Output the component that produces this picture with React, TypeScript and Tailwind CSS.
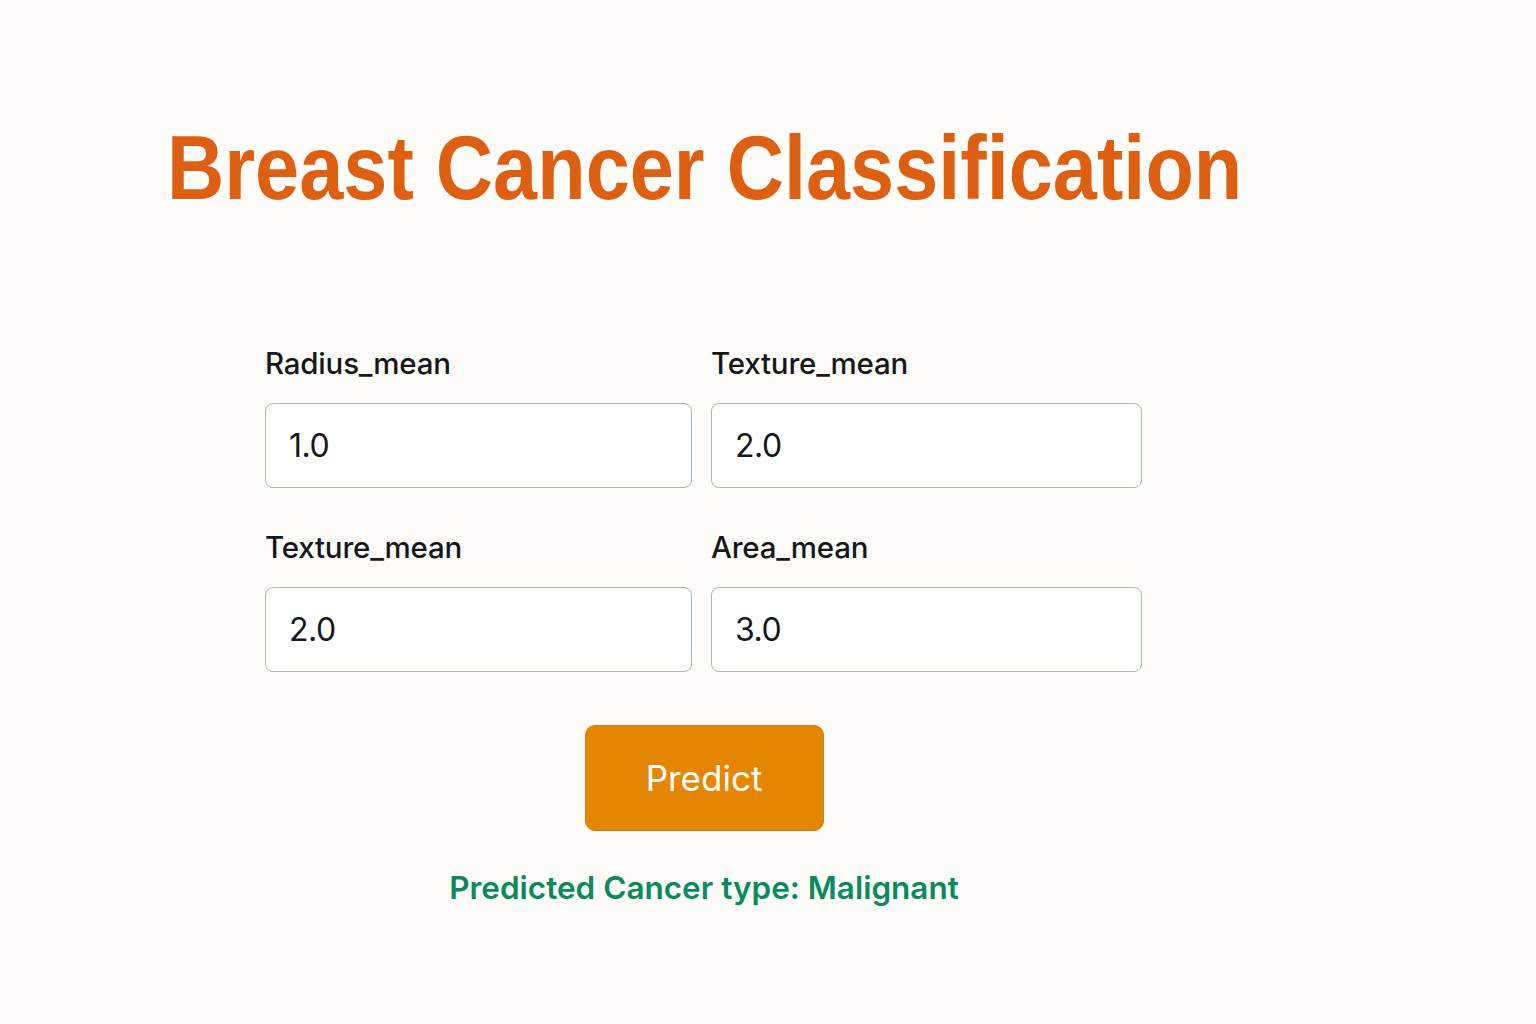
import React from "react";

function Field({ label, value, w }: { label: string; value: string; w: string }) {
  return (
    <div className={`flex flex-col ${w}`}>
      <label className="h-[38px] text-[29.5px] leading-[38px] font-medium text-[#15171c] tracking-[-0.2px]">{label}</label>
      <div className="mt-[21px] h-[85px] rounded-[8px] border border-[#a9b5c4] bg-white flex items-center px-[23px]">
        <span className="text-[32px] text-[#15171c] tracking-[-0.5px]">{value}</span>
      </div>
    </div>
  );
}

export default function App() {
  return (
    <div className="min-h-screen w-full bg-[#fdfcf8] [font-family:Inter,'Noto_Sans',sans-serif]">
      <div className="pt-[118px] pl-[167px]">
        <h1 className="inline-block origin-left scale-x-[0.881] text-[90px] leading-[100px] font-bold text-[#dc5f12] whitespace-nowrap [font-family:'Liberation_Sans',Arial,sans-serif]">
          Breast Cancer Classification
        </h1>
      </div>
      <div className="pl-[265px] pt-[126px]">
        <div className="flex gap-[19px]">
          <Field label="Radius_mean" value="1.0" w="w-[427px]" />
          <Field label="Texture_mean" value="2.0" w="w-[431px]" />
        </div>
        <div className="flex gap-[19px] mt-[40px]">
          <Field label="Texture_mean" value="2.0" w="w-[427px]" />
          <Field label="Area_mean" value="3.0" w="w-[431px]" />
        </div>
      </div>
      <div className="flex justify-center w-[1408px] mt-[53px]">
        <button className="w-[239px] h-[106px] rounded-[10px] bg-[#e58600] border border-[#dc7c00] text-white text-[35px] font-normal">
          Predict
        </button>
      </div>
      <div className="w-[1408px] text-center mt-[37px] text-[31.5px] leading-[40px] font-semibold text-[#0b8a5f]">
        Predicted Cancer type: Malignant
      </div>
    </div>
  );
}
